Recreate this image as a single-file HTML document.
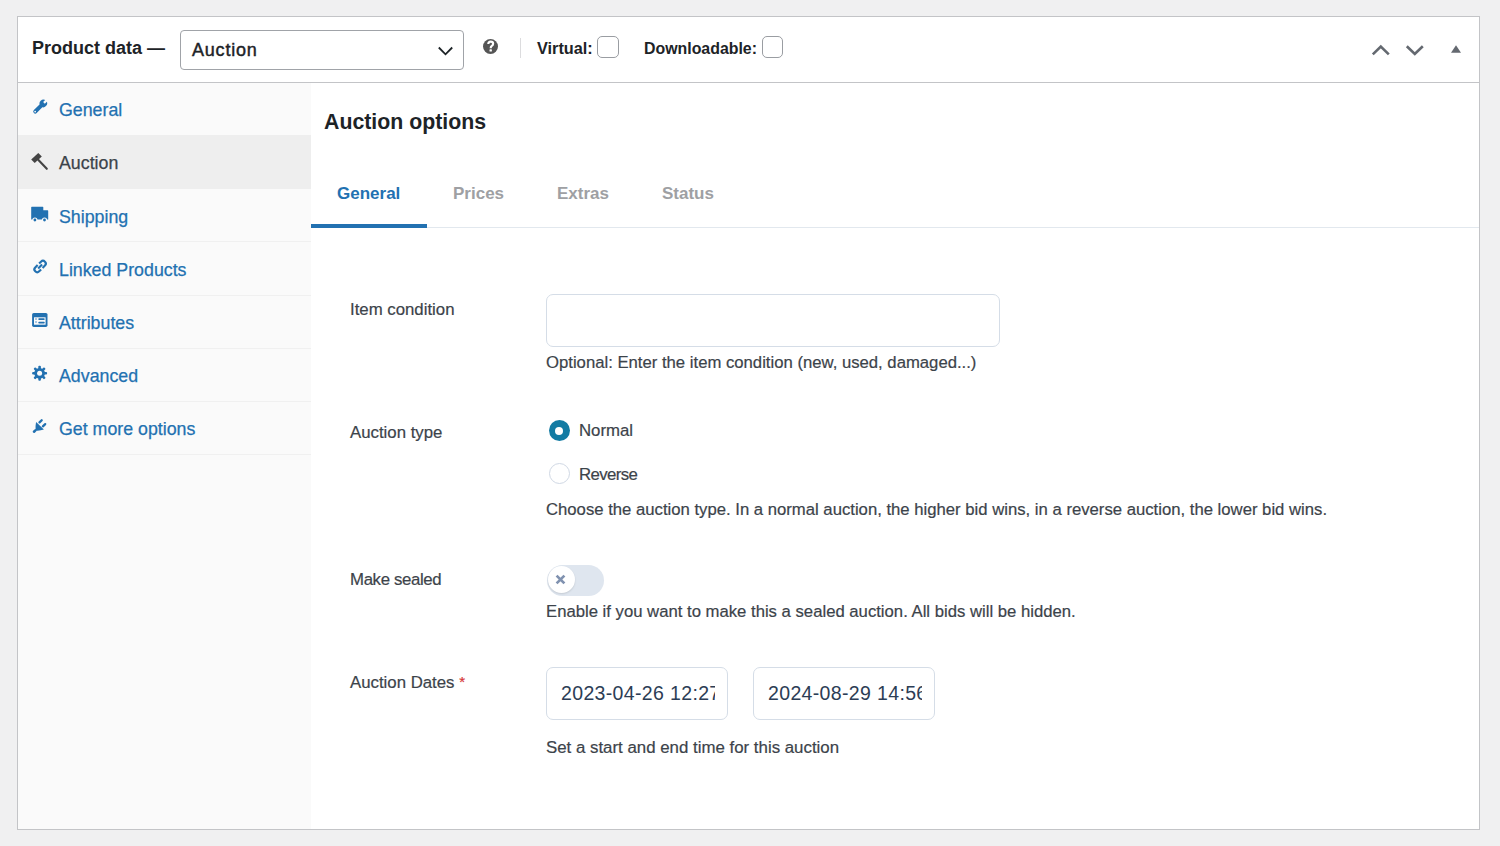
<!DOCTYPE html>
<html><head><meta charset="utf-8">
<style>
*{box-sizing:border-box;margin:0;padding:0}
html,body{width:1500px;height:846px;overflow:hidden;background:#f0f0f1;font-family:"Liberation Sans",sans-serif;color:#3c434a}
.a{position:absolute}
.t{position:absolute;white-space:nowrap}
#panel{left:17px;top:16px;width:1463px;height:814px;background:#fff;border:1px solid #c3c4c7}
#hline{left:18px;top:82px;width:1461px;height:1px;background:#c3c4c7}
#side{left:18px;top:83px;width:293px;height:746px;background:#fafafa}
.sep{position:absolute;left:18px;width:293px;height:1px;background:#f0f0f0}
.si{font-size:17.8px;line-height:17.8px;color:#2271b1;left:59px;-webkit-text-stroke:0.25px currentColor}
.lbl{font-size:16.8px;line-height:16.8px;color:#3c434a;-webkit-text-stroke:0.2px currentColor}
.tab{font-size:17px;line-height:17px;font-weight:bold;color:#9ea0a3}
</style></head>
<body>
<div class="a" id="panel"></div>
<div class="a" id="hline"></div>

<!-- header -->
<div class="t" style="left:32px;top:39.4px;font-size:18px;line-height:18px;font-weight:bold;color:#1d2327">Product data —</div>
<div class="a" style="left:180px;top:30px;width:284px;height:40px;border:1px solid #a0a3a8;border-radius:4px;background:#fff"></div>
<div class="t" style="left:192px;top:41px;font-size:18px;line-height:18px;letter-spacing:0.8px;-webkit-text-stroke:0.45px #1d2327;color:#1d2327">Auction</div>
<svg class="a" style="left:437px;top:45.6px" width="17" height="11" viewBox="0 0 17 11"><path d="M1.8 1.5 L8.5 8.3 L15.2 1.5" fill="none" stroke="#1d2327" stroke-width="1.8"/></svg>
<div class="a" style="left:482.7px;top:38.8px;width:15.4px;height:15.4px;border-radius:50%;background:#555"></div>
<svg class="a" style="left:478px;top:34px" width="24" height="24" viewBox="0 0 24 24"><path d="M10.3 10 Q10.3 7.7 12.7 7.7 Q15.1 7.7 15.1 9.8 Q15.1 11.1 13.8 11.9 Q12.7 12.6 12.7 14.2" fill="none" stroke="#fff" stroke-width="2.2"/><rect x="11.5" y="15.3" width="2.4" height="2.3" rx="0.6" fill="#fff"/></svg>
<div class="a" style="left:520px;top:38px;width:1px;height:20px;background:#dcdcde"></div>
<div class="t" style="left:537px;top:40.3px;font-size:16.3px;line-height:16.3px;font-weight:bold;color:#1d2327">Virtual:</div>
<div class="a" style="left:597.4px;top:36px;width:21.2px;height:21.6px;border:1px solid #9a9da2;border-radius:5px;background:#fff"></div>
<div class="t" style="left:644px;top:41.3px;font-size:15.9px;line-height:15.9px;font-weight:bold;color:#1d2327">Downloadable:</div>
<div class="a" style="left:762px;top:36px;width:21.2px;height:21.6px;border:1px solid #9a9da2;border-radius:5px;background:#fff"></div>
<svg class="a" style="left:1370px;top:43px" width="100" height="14" viewBox="0 0 100 14">
 <path d="M2.8 11.4 L10.8 3.6 L18.8 11.4" fill="none" stroke="#646970" stroke-width="2.6"/>
 <path d="M36.8 3.2 L44.8 11 L52.8 3.2" fill="none" stroke="#646970" stroke-width="2.6"/>
 <path d="M81 9.7 L91 9.7 L86 2.3 Z" fill="#646970"/>
</svg>

<!-- sidebar -->
<div class="a" id="side"></div>
<div class="a" style="left:18px;top:135px;width:293px;height:54px;background:#eee"></div>
<div class="sep" style="top:241px"></div>
<div class="sep" style="top:295px"></div>
<div class="sep" style="top:348px"></div>
<div class="sep" style="top:401px"></div>
<div class="sep" style="top:454px"></div>
<div class="t si" style="top:102.2px">General</div>
<div class="t si" style="top:155.4px;color:#3c434a">Auction</div>
<div class="t si" style="top:208.6px">Shipping</div>
<div class="t si" style="top:261.8px">Linked Products</div>
<div class="t si" style="top:315px">Attributes</div>
<div class="t si" style="top:368.2px">Advanced</div>
<div class="t si" style="top:421.4px">Get more options</div>


<!-- sidebar icons -->
<svg class="a" style="left:30px;top:97px" width="20" height="20" viewBox="0 0 20 20">
 <defs><mask id="wm"><rect x="-20" y="-20" width="40" height="40" fill="#fff"/><rect x="5.9" y="-1.2" width="5" height="2.4" fill="#000"/><circle cx="-6.6" cy="0" r="0.85" fill="#000"/></mask></defs>
 <g transform="translate(9.8,10) rotate(-45)" fill="#2271b1" mask="url(#wm)">
  <rect x="-8.4" y="-2" width="12" height="4" rx="2"/>
  <circle cx="5" cy="0" r="3.7"/>
 </g>
</svg>
<svg class="a" style="left:30px;top:152px" width="20" height="20" viewBox="0 0 20 20">
 <g transform="translate(1.2,1)">
 <path d="M0 6.5 L7.1 0 L10.6 3.5 L3.5 9.9 Z" fill="#444"/>
 <path d="M7 6.7 L15.6 15.8" stroke="#444" stroke-width="2.1" stroke-linecap="round"/>
 </g>
</svg>
<svg class="a" style="left:30px;top:204px" width="20" height="20" viewBox="0 0 20 20">
 <g transform="translate(1.2,2.7)">
 <path d="M0 0.6 Q0 0 0.6 0 L11.5 0 Q12.1 0 12.1 0.6 L12.1 3.6 L16.4 3.6 Q17 3.6 17 4.2 L17 12.8 L0 12.8 Z" fill="#2271b1"/>
 <circle cx="3.7" cy="13.3" r="2.6" fill="#fafafa"/><circle cx="13.3" cy="13.3" r="2.6" fill="#fafafa"/>
 <circle cx="3.7" cy="13.3" r="1.4" fill="#2271b1"/><circle cx="13.3" cy="13.3" r="1.4" fill="#2271b1"/>
 </g>
</svg>
<svg class="a" style="left:30px;top:256px" width="20" height="20" viewBox="0 0 20 20">
 <g transform="translate(10.1,10.5) rotate(-45) scale(1.16)" fill="none" stroke="#2271b1" stroke-width="1.85">
  <path d="M-0.6 -2.4 L-3.5 -2.4 A2.4 2.4 0 0 0 -3.5 2.4 L-1.2 2.4"/>
  <path d="M0.6 2.4 L3.5 2.4 A2.4 2.4 0 0 0 3.5 -2.4 L1.2 -2.4"/>
  <path d="M-2.4 0 L2.4 0"/>
 </g>
</svg>
<svg class="a" style="left:30px;top:310px" width="20" height="20" viewBox="0 0 20 20">
 <g transform="translate(2.1,2.9)">
 <rect x="0" y="0" width="15.4" height="14" rx="1.6" fill="#2271b1"/>
 <rect x="1.9" y="4.4" width="11.6" height="7.4" fill="#fafafa"/>
 <rect x="3" y="5.3" width="1.8" height="1.6" fill="#8db4d8"/><rect x="3" y="8.3" width="1.8" height="1.6" fill="#8db4d8"/>
 <rect x="6.2" y="5.4" width="6.4" height="1.7" rx="0.8" fill="#2271b1"/><rect x="6.2" y="8.9" width="6.4" height="1.7" rx="0.8" fill="#2271b1"/>
 </g>
</svg>
<svg class="a" style="left:30px;top:363px" width="20" height="20" viewBox="0 0 20 20">
 <g transform="translate(9.6,10.3)" fill="#2271b1">
  <circle r="5.4"/>
  <g id="teeth"><rect x="-1.3" y="-7.5" width="2.6" height="15" rx="1"/><rect x="-1.3" y="-7.5" width="2.6" height="15" rx="1" transform="rotate(45)"/><rect x="-1.3" y="-7.5" width="2.6" height="15" rx="1" transform="rotate(90)"/><rect x="-1.3" y="-7.5" width="2.6" height="15" rx="1" transform="rotate(135)"/></g>
  <circle r="2.5" fill="#fafafa"/>
 </g>
</svg>
<svg class="a" style="left:30px;top:416px" width="20" height="20" viewBox="0 0 20 20">
 <g fill="#2271b1">
  <path d="M6.1 5.9 L13.9 13.6 Q10 15 5.6 14.6 Q5.2 10 6.1 5.9 Z"/>
  <path d="M5.4 14.4 L4 15.7" stroke="#2271b1" stroke-width="2.6" stroke-linecap="round"/>
  <path d="M9.5 6.4 L11.7 4.2 M12.9 10.3 L15.2 8.1" stroke="#2271b1" stroke-width="2.3" stroke-linecap="round"/>
 </g>
</svg>

<!-- main -->
<div class="t" style="left:324px;top:111.8px;font-size:21.3px;line-height:21.3px;font-weight:bold;color:#1d2327">Auction options</div>
<div class="a" style="left:311px;top:227px;width:1168px;height:1px;background:#e2e8ee"></div>
<div class="a" style="left:311px;top:224px;width:116px;height:4px;background:#2271b1"></div>
<div class="t tab" style="left:337px;top:185.2px;color:#2271b1">General</div>
<div class="t tab" style="left:453px;top:185.2px">Prices</div>
<div class="t tab" style="left:557px;top:185.2px">Extras</div>
<div class="t tab" style="left:662px;top:185.2px">Status</div>

<div class="t lbl" style="left:350px;top:302.4px">Item condition</div>
<div class="a" style="left:546px;top:294px;width:454px;height:53px;border:1px solid #d5dde7;border-radius:7px"></div>
<div class="t lbl" style="font-size:16.7px;left:546px;top:355.4px">Optional: Enter the item condition (new, used, damaged...)</div>

<div class="t lbl" style="left:350px;top:425.1px">Auction type</div>
<div class="a" style="left:548.5px;top:420px;width:21px;height:21px;border-radius:50%;background:#137ba3"></div>
<div class="a" style="left:555px;top:426.5px;width:8px;height:8px;border-radius:50%;background:#fff"></div>
<div class="t lbl" style="left:579px;top:422.9px">Normal</div>
<div class="a" style="left:548.5px;top:463px;width:21px;height:21px;border-radius:50%;border:1px solid #d0d8e4;background:#fff"></div>
<div class="t lbl" style="left:579px;top:466.6px;letter-spacing:-0.6px">Reverse</div>
<div class="t lbl" style="font-size:16.7px;left:546px;top:501.9px">Choose the auction type. In a normal auction, the higher bid wins, in a reverse auction, the lower bid wins.</div>

<div class="t lbl" style="left:350px;top:572.2px;letter-spacing:-0.35px">Make sealed</div>
<div class="a" style="left:546.5px;top:565px;width:57px;height:31px;border-radius:16px;background:#dfe6ef"></div>
<div class="a" style="left:547.5px;top:566px;width:27px;height:27px;border-radius:50%;background:#fff;box-shadow:0 1px 2px rgba(0,0,0,.12)"></div>
<svg class="a" style="left:555.3px;top:574.1px" width="11" height="11" viewBox="0 0 11 11"><path d="M1.6 1.6 L9.4 9.4 M9.4 1.6 L1.6 9.4" stroke="#8092b0" stroke-width="2.7" stroke-linecap="butt"/></svg>
<div class="t lbl" style="font-size:16.7px;left:546px;top:604.2px">Enable if you want to make this a sealed auction. All bids will be hidden.</div>

<div class="t lbl" style="left:350px;top:675.1px">Auction Dates <span style="color:#d63638;font-size:15px;position:relative;top:-1px">*</span></div>
<div class="a" style="left:546px;top:667px;width:182px;height:53px;border:1px solid #d5dde7;border-radius:7px;overflow:hidden"><div class="t" style="left:14px;top:16px;font-size:19.5px;line-height:19.5px;letter-spacing:0.35px;color:#2c3d55;width:154px;overflow:hidden">2023-04-26 12:27</div></div>
<div class="a" style="left:753px;top:667px;width:182px;height:53px;border:1px solid #d5dde7;border-radius:7px;overflow:hidden"><div class="t" style="left:14px;top:16px;font-size:19.5px;line-height:19.5px;letter-spacing:0.35px;color:#2c3d55;width:154px;overflow:hidden">2024-08-29 14:56</div></div>
<div class="t lbl" style="font-size:16.85px;left:546px;top:740.2px">Set a start and end time for this auction</div>
</body></html>
